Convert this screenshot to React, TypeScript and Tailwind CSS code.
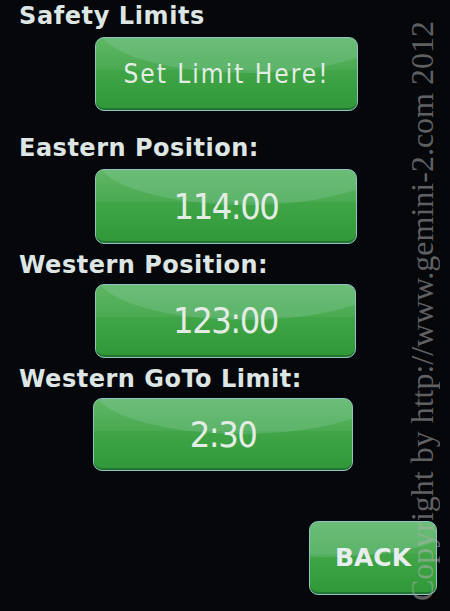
import React from 'react';

const label = "text-[#dde6e4] text-[24px] font-bold leading-none tracking-[0.5px] [font-family:'DejaVu_Sans',sans-serif]";

function GreenButton({ children, className = '' }: { children: React.ReactNode; className?: string }) {
  return (
    <div
      className={`relative overflow-hidden rounded-[9px] border border-[#8fc3c4] bg-gradient-to-b from-[#56b25c] via-[#3ea445] to-[#309838] shadow-[inset_0_-2px_0_rgba(20,80,40,0.5)] flex items-center justify-center ${className}`}
    >
      {/* gloss highlight on the upper right */}
      <div className="absolute -right-[40px] -top-[60px] w-[300px] h-[95px] rounded-[50%] bg-[#8fd0b0]/25" />
      <div className="absolute left-0 right-0 top-0 h-[32px] bg-white/5" />
      <span className="relative">{children}</span>
    </div>
  );
}

export default function App() {
  return (
    <div className="relative w-[450px] h-[611px] overflow-hidden bg-[#05070a]">
      <div className="flex flex-col pl-[19px] pt-[4px]">
        <div className={`${label} tracking-[0.6px]`}>Safety Limits</div>
        <GreenButton className="ml-[76px] mt-[9px] w-[263px] h-[74px]">
          <span className="text-[#e4ece6] text-[26px] tracking-[2px] [font-family:'DejaVu_Sans_Condensed',sans-serif]">
            Set Limit Here!
          </span>
        </GreenButton>

        <div className={`${label} mt-[25px]`}>Eastern Position:</div>
        <GreenButton className="ml-[76px] mt-[9px] w-[262px] h-[75px]">
          <span className="text-[#e4ece6] text-[36px] tracking-[-1.5px] [font-family:'DejaVu_Sans_Condensed',sans-serif]">
            114:00
          </span>
        </GreenButton>

        <div className={`${label} mt-[9px]`}>Western Position:</div>
        <GreenButton className="ml-[76px] mt-[7px] w-[261px] h-[74px]">
          <span className="text-[#e4ece6] text-[36px] tracking-[-1.5px] [font-family:'DejaVu_Sans_Condensed',sans-serif]">
            123:00
          </span>
        </GreenButton>

        <div className={`${label} mt-[9px]`}>Western GoTo Limit:</div>
        <GreenButton className="ml-[74px] mt-[7px] w-[260px] h-[73px]">
          <span className="text-[#e4ece6] text-[36px] tracking-[-1.5px] [font-family:'DejaVu_Sans_Condensed',sans-serif]">
            2:30
          </span>
        </GreenButton>

        <div className="flex justify-end pr-[13px] mt-[50px]">
          <GreenButton className="w-[128px] h-[74px]">
            <span className="text-[#e8eef0] text-[25px] font-bold [font-family:'DejaVu_Sans',sans-serif]">BACK</span>
          </GreenButton>
        </div>
      </div>

      {/* watermark */}
      <div className="absolute right-[12px] bottom-[10px] rotate-180 [writing-mode:vertical-rl] text-[32px] leading-none text-[#b0b0b0]/55 whitespace-nowrap [font-family:'Liberation_Serif',serif]">
        Copyright by http://www.gemini-2.com 2012
      </div>
    </div>
  );
}
